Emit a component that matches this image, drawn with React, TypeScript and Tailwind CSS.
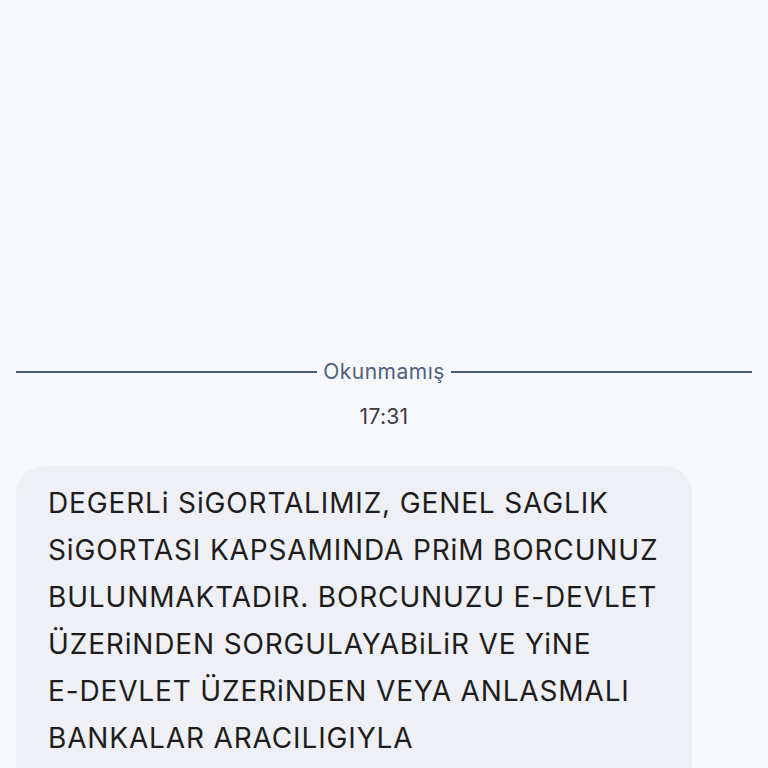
export default function App() {
  return (
    <div className="h-[768px] overflow-hidden bg-[#f7f8fc] font-['Inter',sans-serif]">
      <div className="pt-[358px]">
        <div className="flex items-center gap-[6px] px-4">
          <div className="h-[2px] flex-1 bg-[#4b5a78]" />
          <span className="text-[21px] leading-[28px] tracking-[0.5px] text-[#4e5f80]">Okunmamış</span>
          <div className="h-[2px] flex-1 bg-[#4b5a78]" />
        </div>

        <div className="mt-[17px] text-center text-[21px] leading-[28px] tracking-[0.3px] text-[#3a3d46]">17:31</div>

        <div className="ml-4 mt-[35px] w-[676px] rounded-[28px] bg-[#eef0f5] pl-8 pr-6 pt-[14px] pb-4">
          <p className="text-[28px] leading-[47px] tracking-[0.85px] text-[#1d1d20]">
            DEGERLi SiGORTALIMIZ, GENEL SAGLIK SiGORTASI KAPSAMINDA PRiM BORCUNUZ BULUNMAKTADIR. BORCUNUZU{" "}
            <span className="whitespace-nowrap">E-DEVLET</span> ÜZERiNDEN SORGULAYABiLiR VE YiNE{" "}
            <span className="whitespace-nowrap">E-DEVLET</span> ÜZERiNDEN VEYA ANLASMALI BANKALAR ARACILIGIYLA
            ÖDEYEBiLiRSiNiZ. B001
          </p>
        </div>
      </div>
    </div>
  );
}
